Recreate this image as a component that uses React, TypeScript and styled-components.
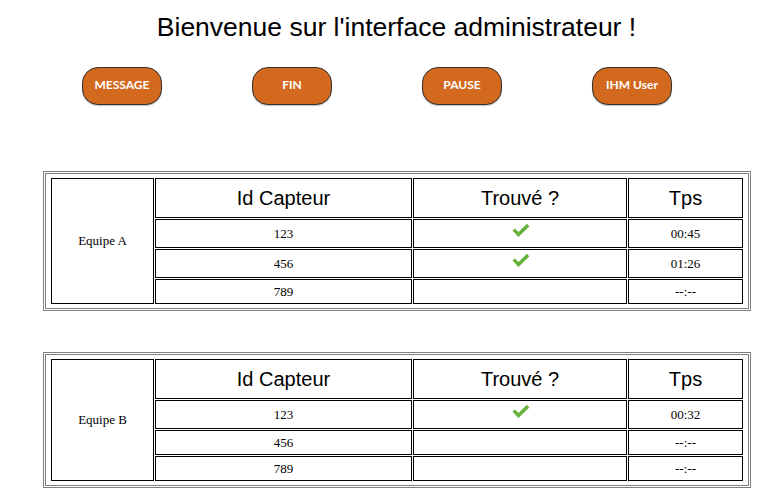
import React from "react";
import styled, { createGlobalStyle } from "styled-components";

const Global = createGlobalStyle`
  html, body { margin: 0; padding: 0; background: #ffffff; }
  body { font-family: "Liberation Serif", "Times New Roman", serif; color: #000; }
`;

const Page = styled.div`
  width: 778px;
  padding: 12px 0 0 0;
  box-sizing: border-box;
`;

const Title = styled.h1`
  margin: 0;
  padding-left: 15px;
  font-family: "Liberation Sans", Arial, sans-serif;
  font-weight: normal;
  font-size: 26.5px;
  line-height: 30px;
  text-align: center;
  color: #000;
`;

const Toolbar = styled.div`
  display: flex;
  gap: 90px;
  margin-top: 25px;
  padding-left: 82px;
`;

const ActionButton = styled.button`
  width: 80px;
  height: 38px;
  box-sizing: border-box;
  border: 1px solid #333;
  border-radius: 16px;
  background: #d2691e;
  color: #fff;
  font-family: "Lato", "Open Sans", sans-serif;
  font-weight: 700;
  font-size: 12px;
  line-height: 14px;
  padding: 0 0 2px;
  box-shadow: 0 1px 1px rgba(0, 0, 0, 0.25);
  cursor: pointer;
`;

const Frame = styled.div<{ $top: number }>`
  margin: ${(p) => p.$top}px 0 0 43px;
  width: 708px;
  box-sizing: border-box;
  border: 3px double #808080;
  padding: 3px 4px;
`;

const Table = styled.table`
  width: 694px;
  table-layout: fixed;
  border-collapse: separate;
  border-spacing: 1px;
`;

const HeadCell = styled.th<{ $w: number }>`
  box-sizing: border-box;
  width: ${(p) => p.$w}px;
  border: 1px solid #000;
  padding: 0;
  font-family: "Liberation Sans", Arial, sans-serif;
  font-weight: normal;
  font-size: 20px;
  line-height: 38px;
  text-align: center;
`;

const TeamCell = styled.td<{ $w: number }>`
  box-sizing: border-box;
  width: ${(p) => p.$w}px;
  border: 1px solid #000;
  padding: 0;
  font-size: 13px;
  text-align: center;
  vertical-align: middle;
`;

const DataCell = styled.td`
  border: 1px solid #000;
  padding: 0;
  font-size: 13px;
  line-height: 23px;
  text-align: center;
  vertical-align: middle;
`;

const CheckIcon = styled.svg`
  display: block;
  width: 20px;
  height: 20px;
  margin: 2px auto 5px;
`;

const Check = () => (
  <CheckIcon viewBox="0 0 20 20">
    <polygon
      points="2.5,8.6 4.9,6.4 8.4,9.9 17,1.8 19.3,4.4 8.4,15"
      fill="#66b03c"
    />
  </CheckIcon>
);

type Row = { id: string; found: boolean; time: string };

const TeamTable = ({ name, rows, top }: { name: string; rows: Row[]; top: number }) => (
  <Frame $top={top}>
    <Table>
      <tbody>
        <tr>
          <TeamCell $w={103} rowSpan={rows.length + 1}>
            {name}
          </TeamCell>
          <HeadCell $w={257}>Id Capteur</HeadCell>
          <HeadCell $w={214}>Trouvé ?</HeadCell>
          <HeadCell $w={115}>Tps</HeadCell>
        </tr>
        {rows.map((r) => (
          <tr key={r.id}>
            <DataCell>{r.id}</DataCell>
            <DataCell>{r.found ? <Check /> : null}</DataCell>
            <DataCell>{r.time}</DataCell>
          </tr>
        ))}
      </tbody>
    </Table>
  </Frame>
);

export default function App() {
  return (
    <>
      <Global />
      <Page>
        <Title>Bienvenue sur l'interface administrateur !</Title>
        <Toolbar>
          <ActionButton>MESSAGE</ActionButton>
          <ActionButton>FIN</ActionButton>
          <ActionButton>PAUSE</ActionButton>
          <ActionButton>IHM User</ActionButton>
        </Toolbar>
        <TeamTable
          name="Equipe A"
          top={66}
          rows={[
            { id: "123", found: true, time: "00:45" },
            { id: "456", found: true, time: "01:26" },
            { id: "789", found: false, time: "--:--" },
          ]}
        />
        <TeamTable
          name="Equipe B"
          top={41}
          rows={[
            { id: "123", found: true, time: "00:32" },
            { id: "456", found: false, time: "--:--" },
            { id: "789", found: false, time: "--:--" },
          ]}
        />
      </Page>
    </>
  );
}
